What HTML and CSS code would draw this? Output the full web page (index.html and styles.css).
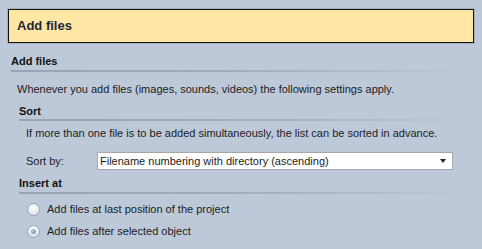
FILE: index.html
```html
<!DOCTYPE html>
<html lang="en">
<head>
    <meta charset="UTF-8">
    <title>Add files</title>
    <link rel="stylesheet" href="styles.css">
</head>
<body>
    <div class="page">
        <header class="title-box">Add files</header>
        <section class="group">
            <h2 class="group-title">Add files</h2>
            <p class="intro">Whenever you add files (images, sounds, videos) the following settings apply.</p>

            <h3 class="sub-title">Sort</h3>
            <p class="hint">If more than one file is to be added simultaneously, the list can be sorted in advance.</p>
            <div class="sort-row">
                <label for="sort-by">Sort by:</label>
                <div class="select" id="sort-by">
                    <span>Filename numbering with directory (ascending)</span>
                    <span class="arrow"></span>
                </div>
            </div>

            <h3 class="sub-title insert">Insert at</h3>
            <div class="radios">
                <label class="radio">
                    <span class="dot"></span>
                    <span>Add files at last position of the project</span>
                </label>
                <label class="radio checked">
                    <span class="dot"></span>
                    <span>Add files after selected object</span>
                </label>
            </div>
        </section>
    </div>
</body>
</html>
```

FILE: styles.css
```css
body {
    margin: 0;
    padding: 0;
    background-color: #bdc9d9;
    font-family: "Liberation Sans", Arial, sans-serif;
    font-size: 11px;
    color: #1c1c1c;
}

.page {
    padding: 9px 8px 0 8px;
}

.title-box {
    height: 34px;
    box-sizing: border-box;
    border: 1px solid #111;
    box-shadow: 0 0 0 1px #a4afc0;
    background-color: #fee6a5;
    padding-left: 8px;
    font-size: 13px;
    font-weight: bold;
    line-height: 32px;
    color: #1d2738;
}

.group {
    padding-left: 3px;
}

.group-title,
.sub-title {
    margin: 0;
    font-size: 11px;
    font-weight: bold;
    line-height: 13px;
    color: #111;
    padding-bottom: 3px;
    background-image: linear-gradient(to right, #98a4b5, #a2aebf 50%, rgba(189, 201, 217, 0));
    background-size: 100% 2px;
    background-position: bottom left;
    background-repeat: no-repeat;
}

.group-title {
    margin-top: 12px;
    padding-bottom: 4px;
}

.intro {
    margin: 11px 0 0 6px;
    line-height: 13px;
}

.sub-title {
    margin: 9px 0 0 8px;
}

.hint {
    margin: 6px 0 0 15px;
    line-height: 13px;
}

.sort-row {
    display: flex;
    align-items: center;
    margin: 12px 0 0 15px;
}

.sort-row label {
    width: 71px;
}

.select {
    width: 356px;
    height: 18px;
    box-sizing: border-box;
    border: 1px solid #a7a7a7;
    background-color: #fff;
    display: flex;
    align-items: center;
    justify-content: space-between;
    padding: 0 6px 0 2px;
}

.arrow {
    width: 0;
    height: 0;
    border-left: 3px solid transparent;
    border-right: 3px solid transparent;
    border-top: 4px solid #222;
}

.sub-title.insert {
    margin-top: 7px;
    padding-bottom: 4px;
}

.radios {
    display: flex;
    flex-direction: column;
    gap: 8px;
    margin: 8px 0 0 16px;
}

.radio {
    display: flex;
    align-items: center;
    gap: 7px;
    height: 14px;
}

.dot {
    width: 13px;
    height: 13px;
    box-sizing: border-box;
    border-radius: 50%;
    border: 1px solid #97a3b2;
    background: radial-gradient(circle at 50% 35%, #ffffff, #e4e8ee 60%, #cfd6df);
    display: flex;
    align-items: center;
    justify-content: center;
}

.radio.checked .dot::after {
    content: "";
    width: 5px;
    height: 5px;
    border-radius: 50%;
    background: radial-gradient(circle at 40% 35%, #b9c8e6, #6c82ab);
}
```
